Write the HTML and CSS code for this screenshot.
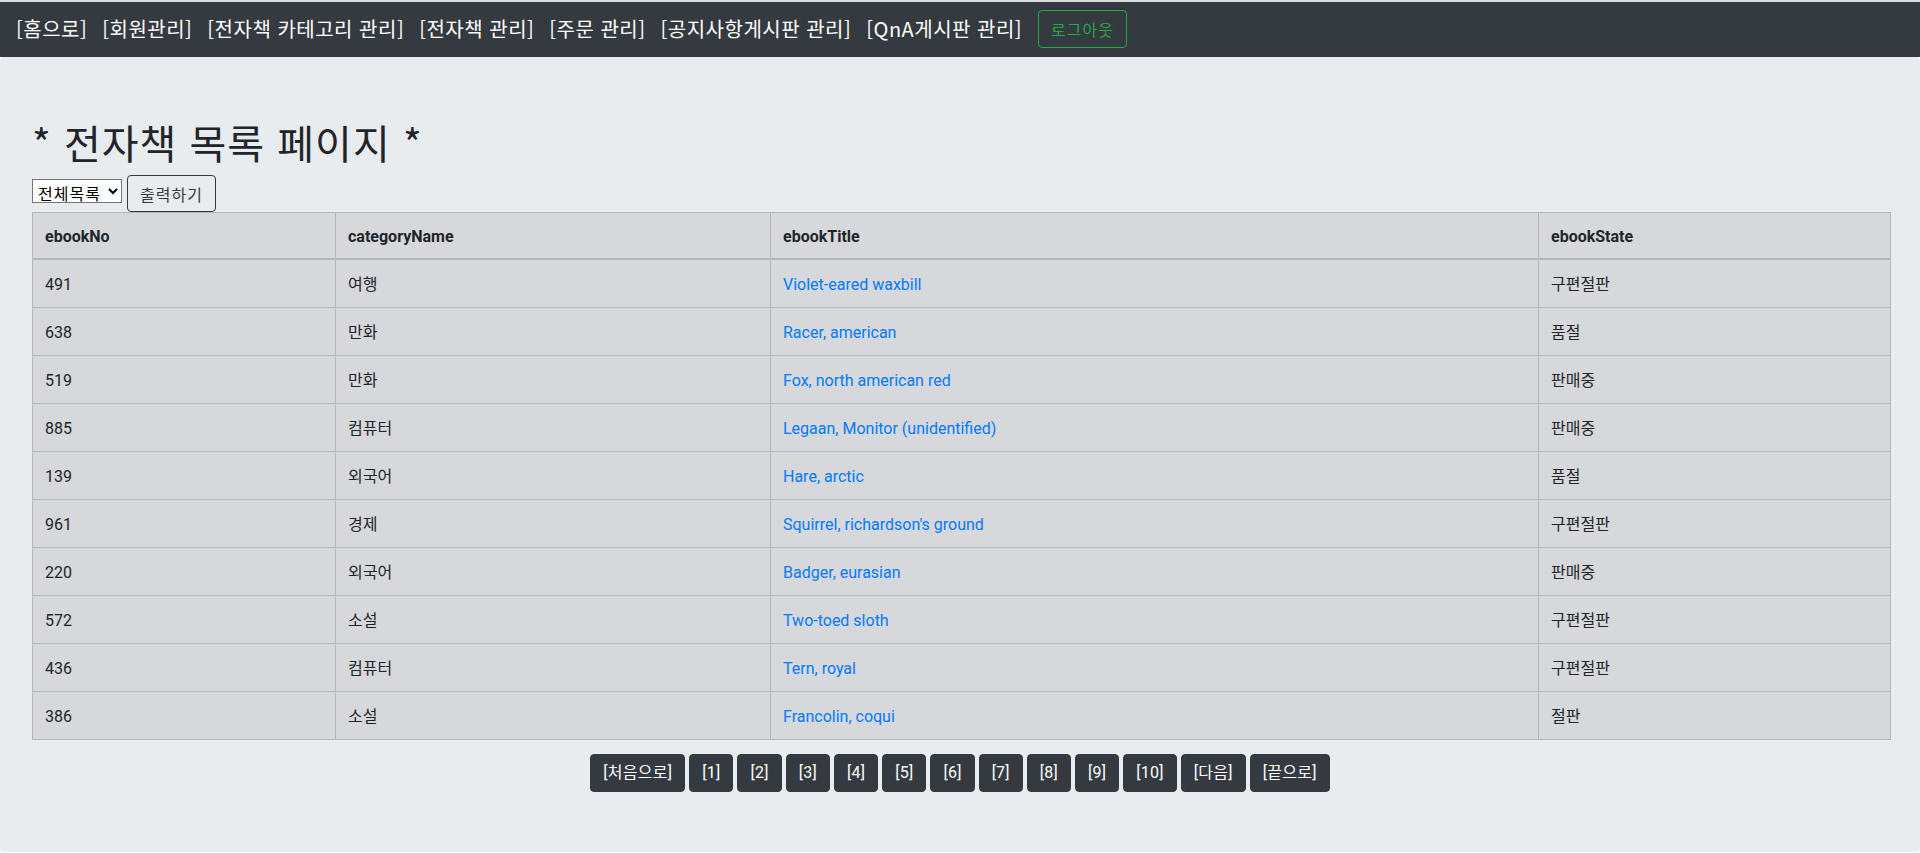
FILE: index.html
```html
<!DOCTYPE html>
<html lang="ko">
<head>
<meta charset="utf-8">
<title>전자책 목록 페이지</title>
<link rel="stylesheet" href="styles.css">
</head>
<body>
<nav class="topnav">
  <a class="nav-link" href="#">[홈으로]</a>
  <a class="nav-link" href="#">[회원관리]</a>
  <a class="nav-link" href="#">[전자책 카테고리 관리]</a>
  <a class="nav-link" href="#">[전자책 관리]</a>
  <a class="nav-link" href="#">[주문 관리]</a>
  <a class="nav-link" href="#">[공지사항게시판 관리]</a>
  <a class="nav-link" href="#">[QnA게시판 관리]</a>
  <a class="btn-logout" href="#">로그아웃</a>
</nav>
<main class="jumbotron">
  <h1 class="page-title">* 전자책 목록 페이지 *</h1>
  <form class="filter-row">
    <select class="filter-select">
      <option>전체목록</option>
    </select>
    <button type="button" class="btn-print">출력하기</button>
  </form>
  <table class="ebook-table">
    <colgroup>
      <col class="col-no">
      <col class="col-cat">
      <col class="col-title">
      <col class="col-state">
    </colgroup>
    <thead>
      <tr><th>ebookNo</th><th>categoryName</th><th>ebookTitle</th><th>ebookState</th></tr>
    </thead>
    <tbody>
      <tr><td>491</td><td>여행</td><td><a href="#">Violet-eared waxbill</a></td><td>구편절판</td></tr>
      <tr><td>638</td><td>만화</td><td><a href="#">Racer, american</a></td><td>품절</td></tr>
      <tr><td>519</td><td>만화</td><td><a href="#">Fox, north american red</a></td><td>판매중</td></tr>
      <tr><td>885</td><td>컴퓨터</td><td><a href="#">Legaan, Monitor (unidentified)</a></td><td>판매중</td></tr>
      <tr><td>139</td><td>외국어</td><td><a href="#">Hare, arctic</a></td><td>품절</td></tr>
      <tr><td>961</td><td>경제</td><td><a href="#">Squirrel, richardson's ground</a></td><td>구편절판</td></tr>
      <tr><td>220</td><td>외국어</td><td><a href="#">Badger, eurasian</a></td><td>판매중</td></tr>
      <tr><td>572</td><td>소설</td><td><a href="#">Two-toed sloth</a></td><td>구편절판</td></tr>
      <tr><td>436</td><td>컴퓨터</td><td><a href="#">Tern, royal</a></td><td>구편절판</td></tr>
      <tr><td>386</td><td>소설</td><td><a href="#">Francolin, coqui</a></td><td>절판</td></tr>
    </tbody>
  </table>
  <div class="pager">
    <a class="btn-page" href="#">[처음으로]</a>
    <a class="btn-page" href="#">[1]</a>
    <a class="btn-page" href="#">[2]</a>
    <a class="btn-page" href="#">[3]</a>
    <a class="btn-page" href="#">[4]</a>
    <a class="btn-page" href="#">[5]</a>
    <a class="btn-page" href="#">[6]</a>
    <a class="btn-page" href="#">[7]</a>
    <a class="btn-page" href="#">[8]</a>
    <a class="btn-page" href="#">[9]</a>
    <a class="btn-page" href="#">[10]</a>
    <a class="btn-page" href="#">[다음]</a>
    <a class="btn-page" href="#">[끝으로]</a>
  </div>
</main>
</body>
</html>
```
FILE: styles.css
```css
* { box-sizing: border-box; }
html, body { margin: 0; padding: 0; }
body {
  background: #ffffff;
  border-top: 2px solid #dcdde0;
  font-family: Roboto, "Noto Sans CJK KR", sans-serif;
  font-size: 16px;
  line-height: 1.5;
  color: #212529;
}
.topnav {
  background: #343a40;
  display: flex;
  align-items: center;
  gap: 15px;
  padding: 8px 16px 9px;
}
.nav-link {
  color: #ffffff;
  text-decoration: none;
  font-size: 20px;
  line-height: 30px;
  letter-spacing: 0.5px;
  font-family: "Noto Sans CJK KR", "Noto Sans", sans-serif;
}
.btn-logout {
  display: inline-block;
  border: 1px solid #28a745;
  border-radius: 4px;
  color: #28a745;
  text-decoration: none;
  padding: 6px 12px;
  font-size: 16px;
  line-height: 24px;
  letter-spacing: 1px;
  margin-left: 1px;
  font-family: "Noto Sans CJK KR", sans-serif;
}
.jumbotron {
  background: #e9ecef;
  border-radius: 4px;
  padding: 61px 32px 60px;
}
.page-title {
  margin: 0 0 9px;
  font-size: 40px;
  font-weight: 400;
  line-height: 48px;
  letter-spacing: 1px;
  font-family: "Noto Sans CJK KR", sans-serif;
}
.filter-row {
  display: flex;
  align-items: flex-start;
  gap: 5px;
  margin: 0;
}
.filter-select {
  font-family: "Noto Sans CJK KR", sans-serif;
  font-size: 16px;
  letter-spacing: 1px;
  width: 90px;
  height: 24px;
  padding: 0 0 0 1px;
  border: 1px solid #767676;
  border-radius: 0;
  background: #ffffff;
  color: #000;
  margin-top: 4px;
}
.btn-print {
  font-family: "Noto Sans CJK KR", sans-serif;
  font-size: 16px;
  line-height: 24px;
  letter-spacing: 1px;
  padding: 6px 12px;
  height: 37px;
  border: 1px solid #343a40;
  border-radius: 4px;
  background: transparent;
  color: #343a40;
}
.ebook-table {
  width: 100%;
  table-layout: fixed;
  border-collapse: collapse;
  background: #d6d8db;
  margin-bottom: 14px;
  font-size: 16px;
}
.col-no { width: 303px; }
.col-cat { width: 435px; }
.col-title { width: 768px; }
.col-state { width: 352px; }
.ebook-table th,
.ebook-table td {
  border: 1px solid #b3b7bb;
  padding: 12.5px 12px 10.5px;
  line-height: 24px;
  text-align: left;
  vertical-align: top;
}
.ebook-table th {
  border-bottom: 2px solid #b3b7bb;
  padding: 12px 12px 9px;
  font-weight: 700;
}
.ebook-table a {
  color: #007bff;
  text-decoration: none;
}
.pager {
  display: flex;
  justify-content: center;
  gap: 4px;
}
.btn-page {
  display: inline-block;
  background: #343a40;
  color: #ffffff;
  border: 1px solid #343a40;
  border-radius: 4px;
  padding: 6px 12px;
  line-height: 24px;
  font-size: 16px;
  letter-spacing: 0.25px;
  text-decoration: none;
  font-family: Roboto, "Noto Sans CJK KR", sans-serif;
}
```
